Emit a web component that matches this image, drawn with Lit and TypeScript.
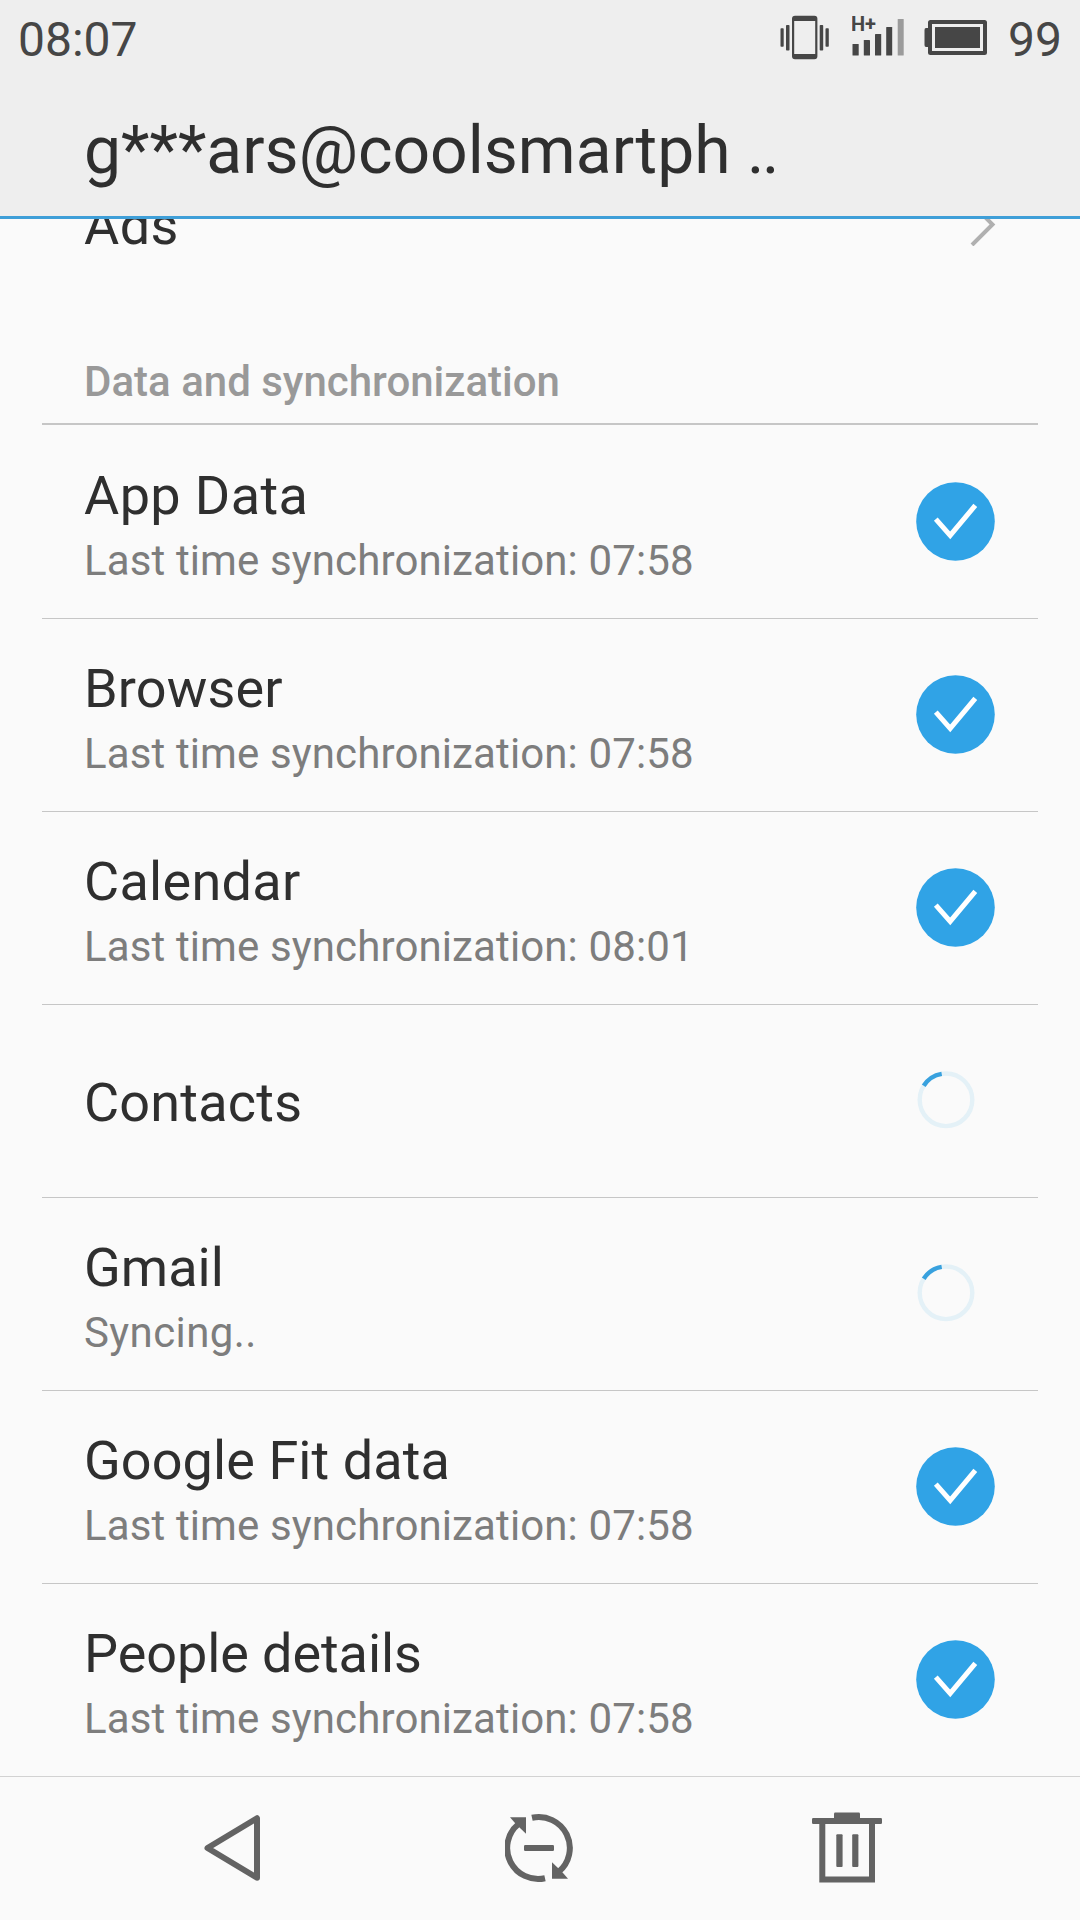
import { LitElement, html, css, svg, nothing } from "lit";
import { customElement, property } from "lit/decorators.js";
import { styleMap } from "lit/directives/style-map.js";

type SyncState = "done" | "busy";

interface SyncItem {
  name: string;
  /** Letter spacing of the name, in pixels. */
  tracking: number;
  detail?: string;
  state: SyncState;
}

const items: SyncItem[] = [
  { name: "App Data", tracking: 0.4, detail: "Last time synchronization: 07:58", state: "done" },
  { name: "Browser", tracking: 0.15, detail: "Last time synchronization: 07:58", state: "done" },
  { name: "Calendar", tracking: 0.3, detail: "Last time synchronization: 08:01", state: "done" },
  { name: "Contacts", tracking: 0.2, state: "busy" },
  { name: "Gmail", tracking: 0, detail: "Syncing..", state: "busy" },
  { name: "Google Fit data", tracking: 0.08, detail: "Last time synchronization: 07:58", state: "done" },
  { name: "People details", tracking: -0.08, detail: "Last time synchronization: 07:58", state: "done" },
];

@customElement("status-bar")
class StatusBar extends LitElement {
  static styles = css`
    :host {
      display: flex;
      align-items: flex-start;
      height: 76px;
      box-sizing: border-box;
      padding: 0 18px 0 18px;
      color: #464646;
      font: 400 48px/80px Roboto, sans-serif;
    }
    .clock {
      flex: 1;
    }
    .icon {
      display: block;
      fill: #464646;
      flex: none;
    }
    .vibrate {
      margin-right: 22px;
    }
    .signal {
      margin-right: 19px;
    }
    .battery {
      margin-right: 21px;
    }
    .network {
      font: 700 20px Roboto, sans-serif;
    }
    .faint {
      fill: #9b9b9b;
    }
    .frame {
      fill: none;
      stroke: #464646;
    }
  `;

  render() {
    return html`
      <span class="clock">08:07</span>
      <svg class="icon vibrate" width="50" height="76" viewBox="780 0 50 76">
        <path
          fill-rule="evenodd"
          d="M795 15.700h19.400q3 0 3 3v37.600q0 3-3 3H795q-3 0-3-3V18.700q0-3 3-3zM794.200 21v33h21V21z"
        />
        <rect x="786" y="25" width="3.500" height="25.500" rx="0.800" />
        <rect x="780.500" y="28.300" width="3.200" height="18.500" rx="0.800" />
        <rect x="819.700" y="25" width="3.500" height="25.500" rx="0.800" />
        <rect x="825.500" y="28.300" width="3.300" height="18.500" rx="0.800" />
      </svg>
      <svg class="icon signal" width="53" height="76" viewBox="852 0 53 76">
        <text class="network" x="851" y="31.300">H+</text>
        <rect x="852.500" y="44" width="6.200" height="11.500" rx="0.600" />
        <rect x="863.800" y="40" width="6.200" height="15.500" rx="0.600" />
        <rect x="875" y="34" width="6.200" height="21.500" rx="0.600" />
        <rect x="886.200" y="27" width="6" height="28.500" rx="0.600" />
        <rect class="faint" x="897.700" y="19" width="6" height="36.500" rx="0.600" />
      </svg>
      <svg class="icon battery" width="63" height="76" viewBox="925 0 63 76">
        <rect class="frame" x="931" y="22" width="55" height="31" rx="0.500" stroke-width="4" />
        <rect x="936" y="27" width="45" height="21" />
        <path d="M929 28h-2q-1.500 0-1.500 2v15q0 2 1.500 2h2z" />
      </svg>
      <span>99</span>
    `;
  }
}

@customElement("sync-indicator")
class SyncIndicator extends LitElement {
  @property() state: SyncState = "done";

  static styles = css`
    :host {
      display: block;
      width: 79px;
      height: 79px;
      padding-bottom: 1px;
    }
    .mark {
      display: block;
    }
    .disc {
      fill: #30a3e6;
    }
    .tick {
      fill: none;
      stroke: #fff;
      stroke-width: 5;
    }
    .track {
      fill: none;
      stroke: #e4f1f7;
      stroke-width: 4.4;
    }
    .sweep {
      fill: none;
      stroke: #38a1de;
      stroke-width: 4.4;
    }
  `;

  render() {
    const done = svg`
      <circle class="disc" cx="39.500" cy="39.500" r="39.300" />
      <path class="tick" d="M19.800 37.100 34.200 53.400 59.300 23.400" />
    `;
    const busy = svg`
      <circle class="track" cx="30" cy="38.800" r="26.300" />
      <path class="sweep" d="M7.700 24.800A26.300 26.300 0 0 1 25.700 12.900" />
    `;
    return html`<svg class="mark" width="79" height="79" viewBox="0 0 79 79">
      ${this.state === "done" ? done : busy}
    </svg>`;
  }
}

@customElement("sync-row")
class SyncRow extends LitElement {
  @property() name = "";
  @property() detail?: string;
  @property({ type: Number }) tracking = 0;

  static styles = css`
    :host {
      display: flex;
      align-items: center;
      height: 193px;
      box-sizing: border-box;
      padding: 0 43px 0 42px;
      border-bottom: 1px solid #c6c6c6;
      font-family: Roboto, sans-serif;
    }
    .labels {
      flex: 1;
      display: flex;
      flex-direction: column;
      gap: 10px;
      padding-top: 4px;
    }
    .labels.double {
      padding-top: 8px;
    }
    .name {
      color: #2f2f2f;
      font-size: 54px;
      line-height: 60px;
    }
    .detail {
      color: #7d7d7d;
      font-size: 42px;
      line-height: 50px;
      letter-spacing: 0.12px;
    }
    .detail.short {
      letter-spacing: 0.4px;
    }
  `;

  render() {
    const short = (this.detail?.length ?? 0) < 12;
    return html`
      <div class=${this.detail ? "labels double" : "labels"}>
        <div class="name" style=${styleMap({ letterSpacing: `${this.tracking}px` })}>${this.name}</div>
        ${this.detail
          ? html`<div class=${short ? "detail short" : "detail"}>${this.detail}</div>`
          : nothing}
      </div>
      <slot></slot>
    `;
  }
}

@customElement("action-bar")
class ActionBar extends LitElement {
  static styles = css`
    :host {
      display: flex;
      justify-content: space-between;
      align-items: center;
      height: 144px;
      box-sizing: border-box;
      padding: 0 198px 1px 204px;
      border-top: 1px solid #d2d2d2;
      background: #fafafa;
    }
    .icon {
      display: block;
      fill: #636363;
    }
    .line {
      fill: none;
      stroke: #636363;
      stroke-width: 6;
    }
    .round {
      stroke-linejoin: round;
    }
  `;

  render() {
    return html`
      <svg class="icon" width="62" height="80" viewBox="204 1808 62 80">
        <path class="line round" d="M207.500 1848 257 1818.200V1877.800z" />
      </svg>
      <svg class="icon" width="68" height="80" viewBox="505 1808 68 80">
        <path class="line" d="M532 1817.800A31 31 0 0 1 558.500 1872" />
        <path class="line" d="M545 1878.200A31 31 0 0 1 518.500 1824" />
        <path d="M510 1817.200H526V1833.800L519.500 1827.500 515 1823z" />
        <path d="M568 1878.800H552V1862.200L558.500 1868.500 563 1873z" />
        <rect x="524" y="1845" width="30" height="6" rx="1.200" />
      </svg>
      <svg class="icon" width="70" height="80" viewBox="812 1808 70 80">
        <rect x="834" y="1812.500" width="26" height="8" rx="1.200" />
        <rect x="812" y="1818" width="70" height="6" rx="1.200" />
        <path class="line" d="M822.300 1822V1879.500H872V1822" />
        <rect x="836.300" y="1834.300" width="6.300" height="32.800" rx="1" />
        <rect x="852.200" y="1834.300" width="6.200" height="32.800" rx="1" />
      </svg>
    `;
  }
}

@customElement("app-root")
class AppRoot extends LitElement {
  static styles = css`
    :host {
      display: flex;
      flex-direction: column;
      height: 1920px;
      overflow: hidden;
      background: #fafafa;
      font-family: Roboto, sans-serif;
    }
    .header {
      flex: none;
      height: 219px;
      box-sizing: border-box;
      background: #eeeeee;
      border-bottom: 3px solid #3f9fd8;
    }
    .title {
      margin: 0;
      padding: 35px 84px 0;
      color: #2f2f2f;
      font-weight: 400;
      font-size: 66px;
      line-height: 80px;
      white-space: nowrap;
    }
    .dots {
      letter-spacing: -2.4px;
    }
    .viewport {
      flex: 1;
      min-height: 0;
      overflow: hidden;
      display: flex;
      flex-direction: column;
      justify-content: flex-end;
      padding: 0 42px;
    }
    .viewport > * {
      flex: none;
    }
    .plain {
      border-bottom: none;
      padding-right: 42px;
    }
    .chevron {
      display: block;
      fill: none;
      stroke: #b0b0b0;
      stroke-width: 4;
    }
    .section {
      margin: 0 0 1px;
      height: 105px;
      box-sizing: border-box;
      padding: 37px 42px 0;
      border-bottom: 2px solid #c6c6c6;
      color: #999;
      font-weight: 500;
      font-size: 42px;
      line-height: 50px;
    }
    .last {
      height: 192px;
      border-bottom: none;
    }
    .bar {
      flex: none;
    }
  `;

  render() {
    return html`
      <header class="header">
        <status-bar></status-bar>
        <h1 class="title">g***ars@coolsmartph <span class="dots">..</span></h1>
      </header>
      <main class="viewport">
        <sync-row class="plain" name="Ads" tracking="0.4">
          <svg class="chevron" width="26" height="44" viewBox="0 0 26 44">
            <path d="M2 2 22.500 22.500 2 43" />
          </svg>
        </sync-row>
        <h2 class="section">Data and synchronization</h2>
        ${items.map(
          (item, i) => html`
            <sync-row
              class=${i === items.length - 1 ? "last" : ""}
              .name=${item.name}
              .detail=${item.detail}
              .tracking=${item.tracking}
            >
              <sync-indicator .state=${item.state}></sync-indicator>
            </sync-row>
          `,
        )}
      </main>
      <action-bar class="bar"></action-bar>
    `;
  }
}
